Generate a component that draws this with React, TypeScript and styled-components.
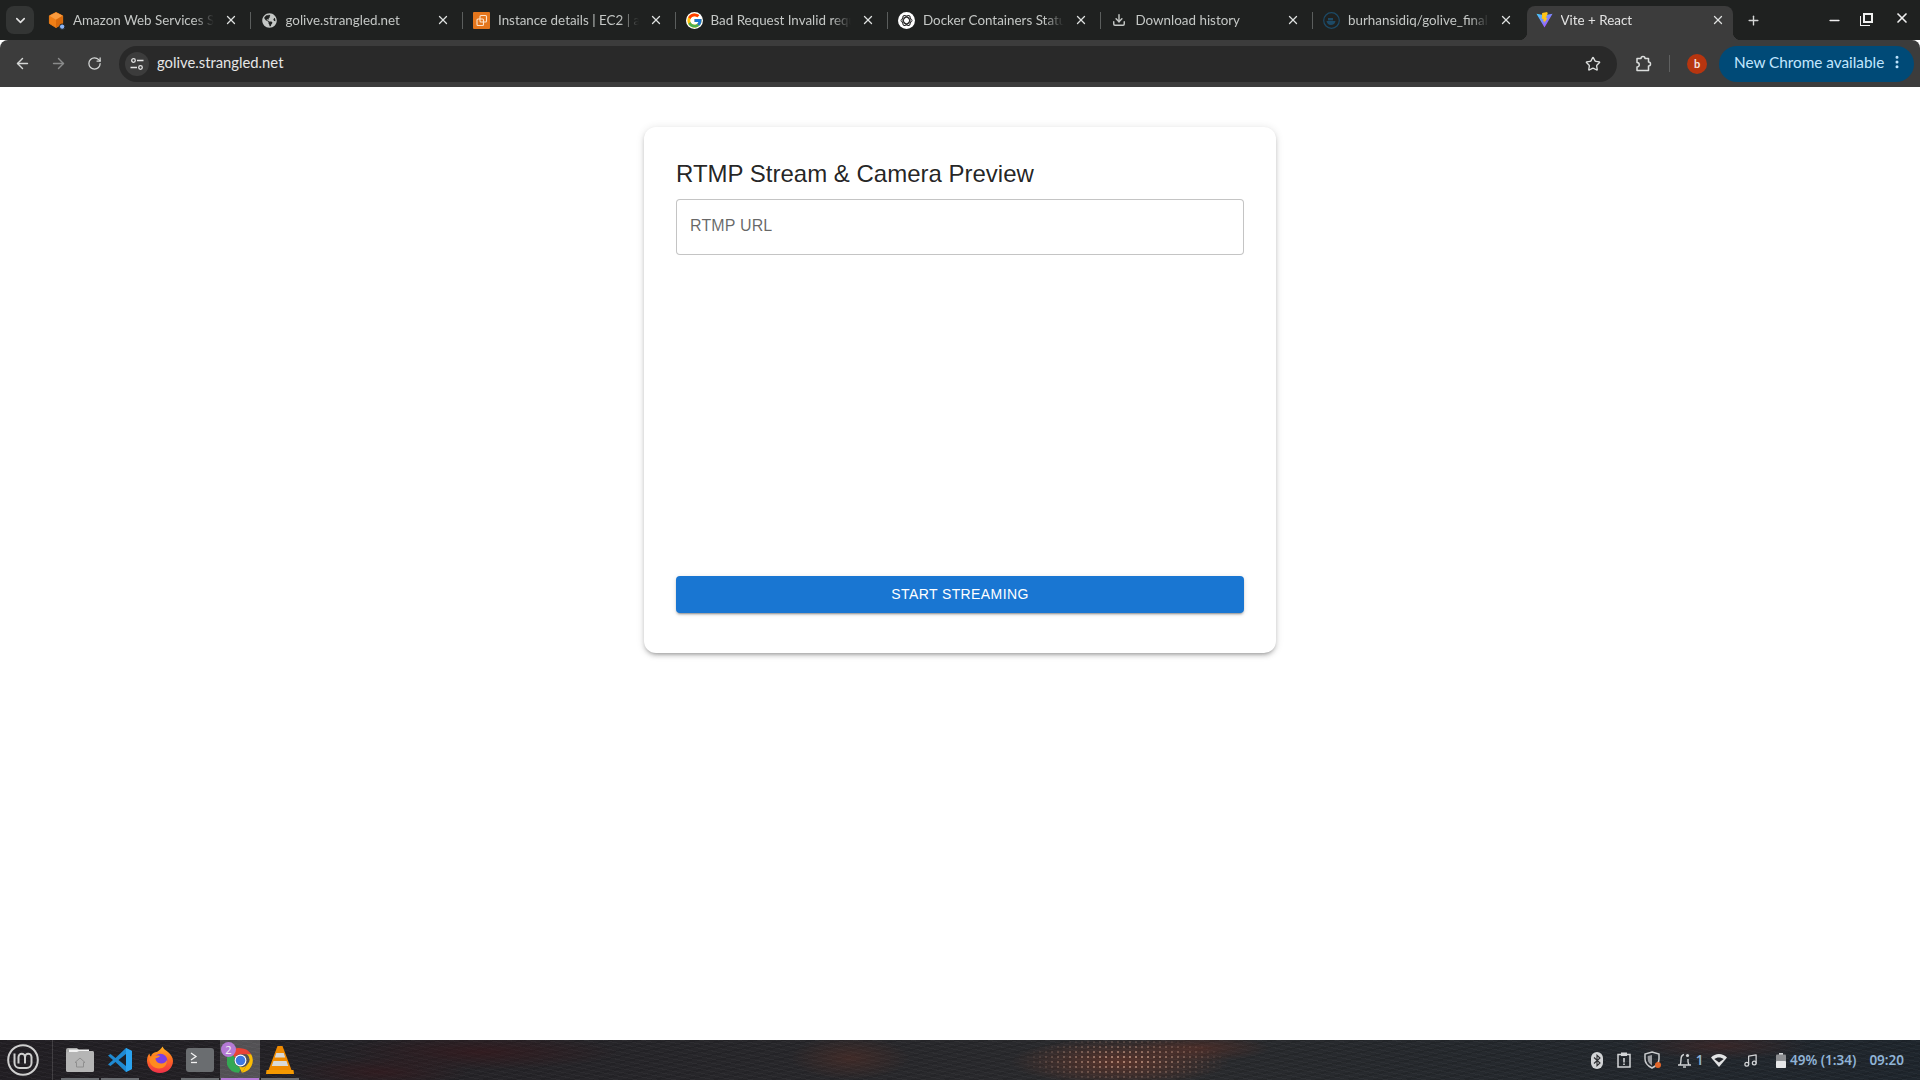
import { ReactNode } from "react";
import styled, { createGlobalStyle } from "styled-components";
import {
  ArrowLeft,
  ArrowRight,
  ChevronDown,
  Download,
  EllipsisVertical,
  Minus,
  Music,
  Plus,
  RotateCw,
  Star,
  X,
} from "lucide-react";
import { FcGoogle } from "react-icons/fc";
import { FaGlobeAmericas } from "react-icons/fa";

const uiFont = `Lato, "Noto Sans", sans-serif`;

const GlobalStyle = createGlobalStyle`
  html, body {
    margin: 0;
    padding: 0;
    height: 100%;
    background: #fff;
  }
  * { box-sizing: border-box; }
`;

const Screen = styled.div`
  display: flex;
  flex-direction: column;
  height: 100vh;
  overflow: hidden;
`;

/* ---- browser tabs ---- */

const TabStrip = styled.div`
  display: flex;
  align-items: flex-end;
  height: 40px;
  background: #1f2120;
  font-family: ${uiFont};
`;

const TabSearch = styled.button`
  display: flex;
  align-items: center;
  justify-content: center;
  width: 28px;
  height: 28px;
  margin: 0 4px 6px 6px;
  padding: 0;
  border: 0;
  border-radius: 8px;
  color: #e3e3e3;
  background: #333534;
`;

const Tab = styled.div<{ $active?: boolean; $last?: boolean }>`
  position: relative;
  flex: none;
  display: flex;
  align-items: center;
  width: 212.5px;
  height: 34px;
  padding: 0 10px 6px 10px;
  color: ${(p) => (p.$active ? "#e3e3e3" : "#c4c7c5")};
  font-size: 13.4px;
  z-index: ${(p) => (p.$active ? 1 : 0)};

  &::before {
    content: "";
    position: absolute;
    z-index: -1;
    ${(p) =>
      p.$active
        ? `
      inset: 0 5px 0 1px;
      border-radius: 8px 8px 0 0;
      background: #3c3c3c;
    `
        : `
      display: none;
    `}
  }

  &::after {
    content: "";
    position: absolute;
    ${(p) =>
      p.$active
        ? `
      left: -7px;
      right: -3px;
      bottom: 0;
      height: 8px;
      z-index: -1;
      background:
        radial-gradient(circle at 0 0, transparent 8px, #3c3c3c 8.5px) left bottom / 8px 8px no-repeat,
        radial-gradient(circle at 100% 0, transparent 8px, #3c3c3c 8.5px) right bottom / 8px 8px no-repeat;
    `
        : `
      right: 0;
      top: 6px;
      height: 17px;
      width: 1px;
      background: ${p.$last ? "transparent" : "#5b5e5d"};
    `}
  }
`;

const TabIcon = styled.span`
  flex: none;
  display: flex;
  align-items: center;
  justify-content: center;
  width: 17px;
  height: 17px;
  margin-right: 8px;
  color: #c4c7c5;
`;

const TabTitle = styled.span`
  flex: 1;
  min-width: 0;
  overflow: hidden;
  white-space: nowrap;
  -webkit-mask-image: linear-gradient(to right, #000 86%, transparent 100%);
  mask-image: linear-gradient(to right, #000 86%, transparent 100%);
`;

const TabClose = styled.span`
  flex: none;
  display: flex;
  justify-content: center;
  width: 20px;
  margin-left: 7px;
  color: #dfe1e0;
`;

const NewTab = styled.span`
  display: flex;
  margin: 0 0 12px 8px;
  color: #d5d7d6;
`;

const WindowControls = styled.div`
  display: flex;
  align-items: center;
  gap: 21px;
  margin: 0 10px 12px auto;
  color: #f0f0f0;
`;

const MaximizeGlyph = styled.span`
  width: 10px;
  height: 10px;
  border: 2px solid #f0f0f0;
  box-shadow: -2px 2px 0 0 #1f2120, -3px 3px 0 0 #f0f0f0;
`;

/* ---- address bar ---- */

const Toolbar = styled.div`
  display: flex;
  align-items: center;
  height: 47px;
  padding: 0 6px 0 12px;
  border-radius: 8px 8px 0 0;
  background: #3c3c3c;
  color: #dcdedd;
  font-family: ${uiFont};
`;

const NavButton = styled.span<{ $disabled?: boolean }>`
  display: flex;
  justify-content: center;
  width: 20px;
  margin-right: 16px;
  color: ${(p) => (p.$disabled ? "#8a8b8b" : "#d5d7d6")};
`;

const UrlBar = styled.div`
  flex: 1;
  display: flex;
  align-items: center;
  height: 36px;
  margin-left: -1px;
  padding: 0 16px 0 6px;
  border-radius: 18px;
  background: #292929;
`;

const SiteInfo = styled.span`
  display: flex;
  align-items: center;
  justify-content: center;
  width: 24px;
  height: 24px;
  border-radius: 50%;
  background: #3c3c3c;
`;

const UrlText = styled.span`
  margin-left: 8px;
  padding-bottom: 4px;
  color: #e6e6e6;
  font-size: 14.8px;
`;

const UrlStar = styled.span`
  display: flex;
  margin-left: auto;
`;

const ExtensionButton = styled.span`
  display: flex;
  margin-left: 17px;
`;

const ToolbarDivider = styled.span`
  width: 1px;
  height: 17px;
  margin: 0 17px 0 17px;
  background: #5f6060;
`;

const Avatar = styled.span`
  display: flex;
  align-items: center;
  justify-content: center;
  width: 20px;
  height: 20px;
  border-radius: 50%;
  background: #b7350f;
  color: #f5e6e0;
  font-size: 11px;
  font-weight: 700;
`;

const UpdatePill = styled.span`
  display: flex;
  align-items: center;
  justify-content: space-between;
  width: 195px;
  height: 36px;
  margin-left: 12px;
  padding: 0 9px 4px 15px;
  border-radius: 18px;
  background: #004a77;
  color: #c2e7ff;
  font-size: 15.3px;
`;

/* ---- page ---- */

const Page = styled.main`
  flex: 1;
  min-height: 0;
  background: #fff;
`;

const Card = styled.section`
  display: flex;
  flex-direction: column;
  width: 632px;
  margin: 40px auto 0;
  padding: 32px 32px 40px;
  border-radius: 12px;
  background: #fff;
  box-shadow:
    0 3px 3px -2px rgba(0, 0, 0, 0.2),
    0 3px 4px 0 rgba(0, 0, 0, 0.14),
    0 1px 8px 0 rgba(0, 0, 0, 0.12);
  font-family: "Liberation Sans", Arial, sans-serif;
`;

const Title = styled.h1`
  margin: 0 0 10px;
  color: rgba(0, 0, 0, 0.87);
  font-size: 24px;
  font-weight: 400;
  line-height: 30px;
`;

const UrlInput = styled.input`
  display: block;
  width: 100%;
  height: 56px;
  padding: 0 13px 3px;
  border: 1px solid rgba(0, 0, 0, 0.23);
  border-radius: 4px;
  outline: none;
  font-family: inherit;
  font-size: 16px;
  letter-spacing: 0.15px;
  color: rgba(0, 0, 0, 0.87);

  &::placeholder {
    color: rgba(0, 0, 0, 0.6);
    opacity: 1;
  }
`;

const Preview = styled.div`
  height: 321px;
`;

const StartButton = styled.button`
  height: 37px;
  padding: 0 0 1px;
  border: 0;
  border-radius: 4px;
  background: #1976d2;
  color: #fff;
  font-family: inherit;
  font-size: 14px;
  letter-spacing: 0.4px;
  text-transform: uppercase;
  box-shadow:
    0 3px 1px -2px rgba(0, 0, 0, 0.2),
    0 2px 2px 0 rgba(0, 0, 0, 0.14),
    0 1px 5px 0 rgba(0, 0, 0, 0.12);
`;

/* ---- desktop panel ---- */

const Panel = styled.footer`
  position: relative;
  flex: none;
  display: flex;
  align-items: stretch;
  height: 40px;
  background:
    radial-gradient(ellipse 110px 24px at 1120px 22px, rgba(135, 60, 40, 0.5), transparent),
    radial-gradient(ellipse 70px 14px at 1200px 8px, rgba(120, 50, 35, 0.4), transparent),
    radial-gradient(ellipse 60px 22px at 850px 18px, rgba(110, 50, 35, 0.35), transparent),
    radial-gradient(ellipse 140px 18px at 480px 12px, rgba(60, 22, 26, 0.55), transparent),
    radial-gradient(ellipse 90px 16px at 380px 32px, rgba(60, 22, 26, 0.5), transparent),
    radial-gradient(ellipse 90px 14px at 1720px 6px, rgba(90, 40, 35, 0.4), transparent),
    repeating-linear-gradient(12deg, rgba(255, 255, 255, 0.03) 0 1px, transparent 1px 4px),
    repeating-linear-gradient(168deg, rgba(0, 0, 0, 0.1) 0 2px, transparent 2px 6px),
    linear-gradient(to right, #221f24, #2a2b2e 60%, #1f262d);
  font-family: "Noto Sans", sans-serif;

  /* sparkle of the sunset on the water in the wallpaper */
  &::before {
    content: "";
    position: absolute;
    top: 0;
    bottom: 0;
    left: 1020px;
    width: 210px;
    background: radial-gradient(circle at 2px 2px, rgba(235, 185, 160, 0.55) 0.8px, transparent 1.4px) 0 0 / 6px 5px;
    -webkit-mask-image: radial-gradient(ellipse 50% 60% at 50% 50%, #000 20%, transparent 100%);
    mask-image: radial-gradient(ellipse 50% 60% at 50% 50%, #000 20%, transparent 100%);
  }
`;

const MenuButton = styled.div`
  display: flex;
  align-items: center;
  justify-content: center;
  width: 53px;
  padding-right: 7px;
  border-right: 1px solid rgba(255, 255, 255, 0.14);
`;

const Launchers = styled.div`
  display: flex;
  margin-left: 7px;
`;

const Launcher = styled.div<{ $running?: boolean; $focused?: boolean }>`
  position: relative;
  display: flex;
  align-items: center;
  justify-content: center;
  width: 40px;
  background: ${(p) => (p.$focused ? "rgba(255, 255, 255, 0.22)" : "transparent")};

  &::after {
    content: "";
    position: absolute;
    left: 1px;
    right: 1px;
    bottom: 0;
    height: 2px;
    background: ${(p) =>
      p.$focused ? "#b57ad6" : p.$running ? "#6b6e72" : "transparent"};
  }
`;

const Badge = styled.span`
  position: absolute;
  top: 2px;
  left: 1px;
  width: 15px;
  height: 15px;
  border-radius: 50%;
  background: #b57ad6;
  color: #f2f2f2;
  font-size: 11px;
  line-height: 15px;
  text-align: center;
`;

const Tray = styled.div`
  display: flex;
  align-items: center;
  margin-left: auto;
  padding-right: 16px;
  color: #d2d4d6;
`;

const TrayItem = styled.span<{ $gap: number }>`
  display: flex;
  align-items: center;
  margin-left: ${(p) => p.$gap}px;
`;

const TrayText = styled.span`
  color: #90b4d6;
  font-size: 13.5px;
  font-weight: 600;
  white-space: nowrap;
`;

/* ---- favicons and app logos ---- */

const AwsCube = () => (
  <svg width="18" height="19" viewBox="0 0 18 19">
    <path d="M8.500 1l7 3.600v8L8.500 17l-7-4.400v-8z" fill="#f07f16" stroke="#f07f16" strokeLinejoin="round" />
    <path d="M8.500 1l7 3.600-7 4-7-4z" fill="#fa9b3e" />
    <path d="M8.500 8.600l7-4v8L8.500 17z" fill="#d96a0c" />
    <circle cx="15" cy="16" r="2.800" fill="#8ab4f8" stroke="#1f2120" />
  </svg>
);

const Ec2Icon = () => (
  <svg width="17" height="17" viewBox="0 0 17 17">
    <rect width="17" height="17" rx="1" fill="#e4761c" />
    <g fill="none" stroke="#fbe3cc" strokeWidth="1.1">
      <rect x="7" y="3.500" width="6.500" height="6.500" rx="1" />
      <rect x="4" y="7" width="6.500" height="6.500" rx="1" />
    </g>
  </svg>
);

const KnotIcon = () => (
  <svg width="17" height="17" viewBox="0 0 17 17">
    <circle cx="8.500" cy="8.500" r="8.500" fill="#fff" />
    <g fill="none" stroke="#222" strokeWidth="1">
      <ellipse cx="8.500" cy="8.500" rx="5.500" ry="3" />
      <ellipse cx="8.500" cy="8.500" rx="5.500" ry="3" transform="rotate(60 8.500 8.500)" />
      <ellipse cx="8.500" cy="8.500" rx="5.500" ry="3" transform="rotate(120 8.500 8.500)" />
    </g>
  </svg>
);

const DockerWhale = () => (
  <svg width="17" height="17" viewBox="0 0 17 17">
    <circle cx="8.500" cy="8.500" r="7.800" fill="none" stroke="#1d4a66" strokeWidth="1.200" />
    <path d="M3.500 9h9c-.3 2.600-2.200 4-4.600 4-2.400 0-3.900-1.500-4.400-4z" fill="#1d4a66" />
    <rect x="5" y="6" width="5" height="2.400" fill="#1d4a66" />
  </svg>
);

const ViteIcon = () => (
  <svg width="18" height="18" viewBox="0 0 18 18">
    <defs>
      <linearGradient id="viteBody" x1="0" y1="0" x2="1" y2="1">
        <stop offset="0" stopColor="#41d1ff" />
        <stop offset="1" stopColor="#bd34fe" />
      </linearGradient>
    </defs>
    <path d="M0.500 2.500L9 17 17.500 2.500 9 4z" fill="url(#viteBody)" />
    <path d="M11.800 0.500L6.500 1.600 6.200 8 8 7.600 7.500 10.500 9 10 8.700 12.500 12.200 6.500 10.300 6.900 12.400 2.200z" fill="#ffc517" />
  </svg>
);

const TuneIcon = () => (
  <svg width="14" height="14" viewBox="0 0 14 14" fill="none" stroke="#e3e3e3" strokeWidth="1.300">
    <circle cx="3.500" cy="3.500" r="1.800" />
    <circle cx="10.500" cy="10.500" r="1.800" />
    <path d="M7 3.500h6.500M0.500 10.500H7" />
  </svg>
);

const PuzzleIcon = () => (
  <svg width="18" height="18" viewBox="0 0 18 18" fill="none" stroke="#dcdedd" strokeWidth="1.500" strokeLinejoin="round">
    <path d="M3 3.500H7a2 2 0 0 1 4 0h3.500V7a2 2 0 0 1 0 4v4.500H3V12a2.200 2.200 0 0 0 0-4.500z" />
  </svg>
);

const MintLogo = () => (
  <svg width="32" height="32" viewBox="0 0 32 32" fill="none" stroke="#cfcfcf">
    <circle cx="16" cy="16" r="14.800" strokeWidth="2" />
    <path
      d="M7.500 9.500V19a5 5 0 0 0 5 5h7a5 5 0 0 0 5-5v-6a3.250 3.250 0 0 0-6.500 0v6.500M18 13a3.250 3.250 0 0 0-6.500 0v6.500"
      strokeWidth="2"
    />
  </svg>
);

const FilesIcon = () => (
  <svg width="30" height="26" viewBox="0 0 30 26">
    <path d="M1 3a2 2 0 0 1 2-2h9l3 3h12a2 2 0 0 1 2 2v17a2 2 0 0 1-2 2H3a2 2 0 0 1-2-2z" fill="#a9a9a9" />
    <path d="M4 2.500h20v2.500H4z" fill="#f1f1f1" />
    <path d="M1 7a2 2 0 0 1 2-2h9l2-1h13a2 2 0 0 1 2 2v17a2 2 0 0 1-2 2H3a2 2 0 0 1-2-2z" fill="#b5b5b5" />
    <path d="M15 11l-5 4.500h1.500V20h7v-4.500H20z" fill="none" stroke="#8f8f8f" strokeWidth="1" />
  </svg>
);

const VsCodeIcon = () => (
  <svg width="26" height="26" viewBox="0 0 26 26">
    <path d="M19 1l6 3v18l-6 3L8.500 15 3.500 19 1 17.500 6 13 1 8.500 3.500 7l5 4z" fill="#1f8ad2" />
    <path d="M19 7L11.500 13 19 19z" fill="#1c2027" />
    <path d="M19 1l6 3v18l-6 3z" fill="#2aa3ef" />
  </svg>
);

const FirefoxIcon = () => (
  <svg width="28" height="28" viewBox="0 0 28 28">
    <defs>
      <linearGradient id="foxBody" x1="0.500" y1="0" x2="0.500" y2="1">
        <stop offset="0" stopColor="#ffb21f" />
        <stop offset="0.500" stopColor="#ff6a22" />
        <stop offset="1" stopColor="#f0304a" />
      </linearGradient>
    </defs>
    <path d="M14 27C6.500 27 1 21.500 1 14.500 1 11 2.500 8.500 3.500 7.500c0 1.500.5 2.500 1.500 3C6 7 9 6 11 6c2-1.500 4.500-3.500 5.500-5.500C17.500 3 20 4.500 22 6c3 2.500 5 5.500 5 9 0 6.500-5.500 12-13 12z" fill="url(#foxBody)" />
    <circle cx="14.500" cy="14.500" r="6.800" fill="#7b3fe4" />
    <path d="M3 13c3-3.500 8-4 11-3-1 1.500-3 2-4.500 2.200 0 2.500 2 5 5.500 5.300 3 .2 5-1.500 6-3.500.5 5-3.500 8.500-8 8.500C8 22.500 3.500 18.500 3 13z" fill="#ff8a1f" />
  </svg>
);

const TerminalIcon = () => (
  <svg width="28" height="24" viewBox="0 0 28 24">
    <rect width="28" height="24" rx="3" fill="#6a6d70" />
    <path d="M5 5l5 3.500L5 12" fill="none" stroke="#f2f2f2" strokeWidth="1.300" />
    <path d="M5 14.500h6" stroke="#f2f2f2" strokeWidth="1.300" />
  </svg>
);

const ChromeIcon = () => (
  <svg width="27" height="27" viewBox="0 0 48 48">
    <path d="M24 2a22 22 0 0 1 19 11H24a11 11 0 0 0-10 6.500L6 7.500A22 22 0 0 1 24 2z" fill="#ea4335" />
    <path d="M43 13a22 22 0 0 1-16.500 32.800L36 31a11 11 0 0 0-1-18z" fill="#fbbc04" />
    <path d="M6 7.500L14 19.500A11 11 0 0 0 26.500 35L21 45.800A22 22 0 0 1 6 7.500z" fill="#34a853" />
    <path d="M26.500 45.800L36 31a11 11 0 0 1-14.500 3.700z" fill="#fbbc04" />
    <circle cx="24" cy="24" r="10.500" fill="#fff" />
    <circle cx="24" cy="24" r="8.500" fill="#3f78e0" />
  </svg>
);

const VlcIcon = () => (
  <svg width="28" height="30" viewBox="0 0 28 30">
    <path d="M11.500 1h5l9 24H2.500z" fill="#f08a00" />
    <path d="M10.300 8h7.400l1.500 4.500H8.800zM7.500 16h13l1.700 5H5.800z" fill="#d9d9d9" />
    <path d="M0.500 25h27l.5 4H0z" fill="#f59a00" />
  </svg>
);

const BluetoothIcon = () => (
  <svg width="12" height="17" viewBox="0 0 12 17">
    <rect width="12" height="17" rx="6" fill="#d2d4d6" />
    <path d="M3 5.500l6 5.500-3 2.700V3.300l3 2.700-6 5.500" fill="none" stroke="#2a2b2e" strokeWidth="1.100" />
  </svg>
);

const ClipboardIcon = () => (
  <svg width="14" height="16" viewBox="0 0 14 16">
    <path d="M4 2.500H1v12.500h12V2.500h-3" fill="none" stroke="#d2d4d6" strokeWidth="1.500" />
    <rect x="4" y="0.500" width="6" height="3.500" fill="#d2d4d6" />
    <path d="M7 6v4.500M7 11.500v1.500" stroke="#d2d4d6" strokeWidth="1.600" />
  </svg>
);

const ShieldIcon = () => (
  <svg width="18" height="18" viewBox="0 0 18 18">
    <path d="M8 1l7 2v5c0 4-3 7-7 9-4-2-7-5-7-9V3z" fill="none" stroke="#c9cbcd" strokeWidth="1.500" />
    <path d="M8 4v10.500c-2.500-1.500-4.300-3.500-4.300-6.500V5z" fill="#9a9ca0" />
    <circle cx="14" cy="14" r="3" fill="#e2662a" />
  </svg>
);

const BellIcon = () => (
  <svg width="15" height="16" viewBox="0 0 15 16" fill="none" stroke="#d2d4d6" strokeWidth="1.400">
    <path d="M1 13h13M3 13c1-1.500 1-3 1-5.500C4 5 5 3 7 2.500" />
    <path d="M11 7v2.500c0 1.500.5 2.500 1 3.500" />
    <path d="M6 15h3" />
    <circle cx="10.500" cy="3.500" r="1.600" fill="#d2d4d6" stroke="none" />
  </svg>
);

const WifiIcon = () => (
  <svg width="16" height="13" viewBox="0 0 16 13">
    <path d="M8 13L0 3.500C2 1.500 5 0 8 0s6 1.500 8 3.500z" fill="#e2e3e4" />
    <path d="M3.300 5.100C4.600 4.200 6.200 3.600 8 3.600s3.400.6 4.700 1.500L8 8.500z" fill="#24262b" />
  </svg>
);

const BatteryIcon = () => (
  <svg width="10" height="15" viewBox="0 0 10 15">
    <rect x="3" y="0" width="4" height="2" fill="#d2d4d6" />
    <rect x="0" y="1.500" width="10" height="13.500" rx="1" fill="#8d8f92" />
    <rect x="0" y="8" width="10" height="7" rx="1" fill="#e6e7e8" />
  </svg>
);

type TabInfo = { title: string; icon: ReactNode; active?: boolean; last?: boolean };

const tabs: TabInfo[] = [
  { title: "Amazon Web Services Sign-In", icon: <AwsCube /> },
  { title: "golive.strangled.net", icon: <FaGlobeAmericas size={15} /> },
  { title: "Instance details | EC2 | ap-south", icon: <Ec2Icon /> },
  { title: "Bad Request Invalid request", icon: <FcGoogle size={17} style={{ background: "#fff", borderRadius: "50%" }} /> },
  { title: "Docker Containers Status", icon: <KnotIcon /> },
  { title: "Download history", icon: <Download size={14} strokeWidth={2.5} /> },
  { title: "burhansidiq/golive_final", icon: <DockerWhale />, last: true },
  { title: "Vite + React", icon: <ViteIcon />, active: true },
];

export default function App() {
  return (
    <Screen>
      <GlobalStyle />
      <TabStrip>
        <TabSearch>
          <ChevronDown size={15} strokeWidth={2.5} />
        </TabSearch>
        {tabs.map((tab) => (
          <Tab key={tab.title} $active={tab.active} $last={tab.last}>
            <TabIcon>{tab.icon}</TabIcon>
            <TabTitle>{tab.title}</TabTitle>
            <TabClose>
              <X size={14} strokeWidth={2.2} />
            </TabClose>
          </Tab>
        ))}
        <NewTab>
          <Plus size={15} strokeWidth={2.2} />
        </NewTab>
        <WindowControls>
          <Minus size={15} strokeWidth={2.5} style={{ marginTop: 6 }} />
          <MaximizeGlyph />
          <X size={16} strokeWidth={2.5} />
        </WindowControls>
      </TabStrip>

      <Toolbar>
        <NavButton>
          <ArrowLeft size={17} />
        </NavButton>
        <NavButton $disabled>
          <ArrowRight size={17} />
        </NavButton>
        <NavButton>
          <RotateCw size={15} />
        </NavButton>
        <UrlBar>
          <SiteInfo>
            <TuneIcon />
          </SiteInfo>
          <UrlText>golive.strangled.net</UrlText>
          <UrlStar>
            <Star size={16} strokeWidth={2} />
          </UrlStar>
        </UrlBar>
        <ExtensionButton>
          <PuzzleIcon />
        </ExtensionButton>
        <ToolbarDivider />
        <Avatar>b</Avatar>
        <UpdatePill>
          New Chrome available
          <EllipsisVertical size={16} strokeWidth={2.5} />
        </UpdatePill>
      </Toolbar>

      <Page>
        <Card>
          <Title>RTMP Stream &amp; Camera Preview</Title>
          <UrlInput placeholder="RTMP URL" />
          <Preview />
          <StartButton>Start Streaming</StartButton>
        </Card>
      </Page>

      <Panel>
        <MenuButton>
          <MintLogo />
        </MenuButton>
        <Launchers>
          <Launcher $running>
            <FilesIcon />
          </Launcher>
          <Launcher $running>
            <VsCodeIcon />
          </Launcher>
          <Launcher>
            <FirefoxIcon />
          </Launcher>
          <Launcher $running>
            <TerminalIcon />
          </Launcher>
          <Launcher $focused>
            <ChromeIcon />
            <Badge>2</Badge>
          </Launcher>
          <Launcher $running>
            <VlcIcon />
          </Launcher>
        </Launchers>
        <Tray>
          <TrayItem $gap={0}>
            <BluetoothIcon />
          </TrayItem>
          <TrayItem $gap={14}>
            <ClipboardIcon />
          </TrayItem>
          <TrayItem $gap={13}>
            <ShieldIcon />
          </TrayItem>
          <TrayItem $gap={15}>
            <BellIcon />
            <TrayText>&nbsp;1</TrayText>
          </TrayItem>
          <TrayItem $gap={8}>
            <WifiIcon />
          </TrayItem>
          <TrayItem $gap={16}>
            <Music size={15} />
          </TrayItem>
          <TrayItem $gap={18}>
            <BatteryIcon />
            <TrayText>&nbsp;49% (1:34)</TrayText>
          </TrayItem>
          <TrayItem $gap={13}>
            <TrayText>09:20</TrayText>
          </TrayItem>
        </Tray>
      </Panel>
    </Screen>
  );
}
